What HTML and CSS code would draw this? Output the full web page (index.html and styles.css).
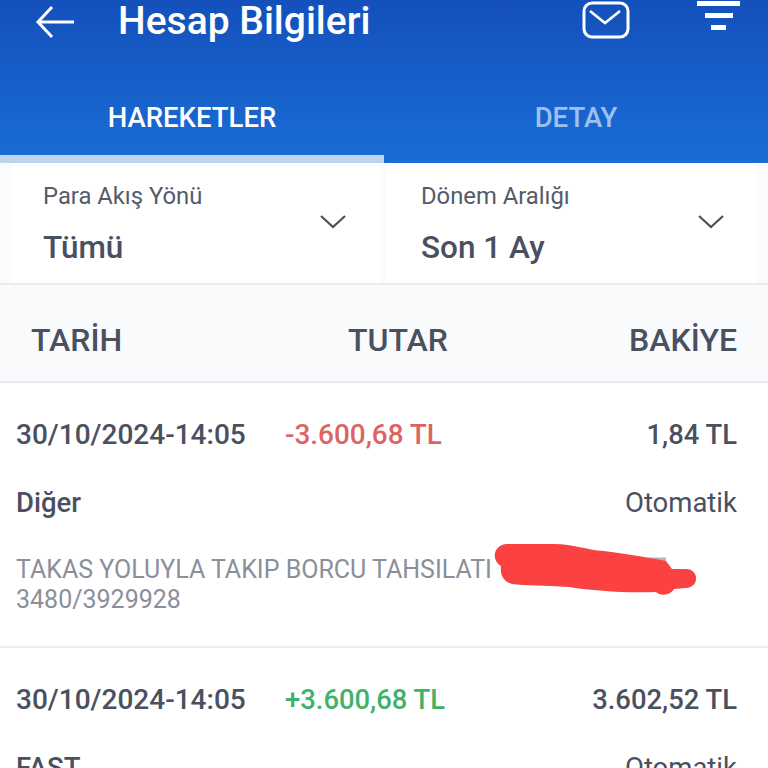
FILE: index.html
```html
<!DOCTYPE html>
<html lang="tr">
<head>
    <meta charset="UTF-8">
    <meta name="viewport" content="width=device-width, initial-scale=1.0">
    <title>Hesap Bilgileri</title>
    <link rel="stylesheet" href="styles.css">
</head>
<body>

<div class="page">
    <header class="header">
        <div class="topbar">
            <svg class="icon-back" width="40" height="34" viewBox="0 0 40 34" fill="none" stroke="#fff" stroke-width="3">
                <path d="M17 2 L3 17 L17 32"/>
                <path d="M3 17 H39"/>
            </svg>
            <div class="page-title">Hesap Bilgileri</div>
            <svg class="icon-mail" width="48" height="38" viewBox="0 0 48 38" fill="none" stroke="#fff">
                <rect x="2" y="2" width="44" height="34" rx="8" stroke-width="3"/>
                <path d="M8 10 L23 22 L38 10" stroke-width="2.6"/>
            </svg>
            <div class="icon-filter">
                <span class="filter-line line-1"></span>
                <span class="filter-line line-2"></span>
                <span class="filter-line line-3"></span>
            </div>
        </div>
        <div class="tabs">
            <div class="tab tab-active">HAREKETLER</div>
            <div class="tab">DETAY</div>
        </div>
    </header>

    <section class="filters">
        <div class="filter-box">
            <div>
                <div class="filter-label">Para Akış Yönü</div>
                <div class="filter-value">Tümü</div>
            </div>
            <svg class="chevron" width="26" height="14" viewBox="0 0 26 14" fill="none" stroke="#4a5060" stroke-width="2.2">
                <path d="M1 1 L13 12 L25 1"/>
            </svg>
        </div>
        <div class="filter-box">
            <div>
                <div class="filter-label">Dönem Aralığı</div>
                <div class="filter-value">Son 1 Ay</div>
            </div>
            <svg class="chevron" width="26" height="14" viewBox="0 0 26 14" fill="none" stroke="#4a5060" stroke-width="2.2">
                <path d="M1 1 L13 12 L25 1"/>
            </svg>
        </div>
    </section>

    <div class="table-head">
        <span>TARİH</span>
        <span>TUTAR</span>
        <span>BAKİYE</span>
    </div>

    <article class="row">
        <div class="row-main">
            <span class="cell-date">30/10/2024-14:05</span>
            <span class="cell-amount minus">-3.600,68 TL</span>
            <span class="cell-balance">1,84 TL</span>
        </div>
        <div class="row-type">
            <span class="type-name">Diğer</span>
            <span class="type-mode">Otomatik</span>
        </div>
        <div class="row-desc">
            TAKAS YOLUYLA TAKIP BORCU TAHSILATI<br>3480/3929928
            <svg class="scribble" width="204" height="54" viewBox="0 0 204 54" fill="#fb4141">
                <path d="M154 14.5 H172 V18 H154 Z" fill="#b4b7bd"/>
                <path d="M12 1 H60 C80 1 92 7 110 8 C135 11 155 15 172 18 L178 26 H192 C205 26 206 44 192 45 L180 46 C176 53 166 53 162 49 C130 50 100 48 75 44 C50 42 30 43 18 41 C8 38 6 30 7 23 C-2 18 -2 3 12 1 Z"/>
            </svg>
        </div>
    </article>

    <article class="row">
        <div class="row-main">
            <span class="cell-date">30/10/2024-14:05</span>
            <span class="cell-amount plus">+3.600,68 TL</span>
            <span class="cell-balance">3.602,52 TL</span>
        </div>
        <div class="row-type">
            <span class="type-name">FAST</span>
            <span class="type-mode">Otomatik</span>
        </div>
    </article>
</div>

</body>
</html>
```

FILE: styles.css
```css
html, body {
    height: 768px;
    overflow: hidden;
}
body {
    font-family: Roboto, "Liberation Sans", sans-serif;
    background-color: #fff;
    color: #4a5060;
    margin: 0;
}
.page {
    height: 768px;
    overflow: hidden;
}

/* header */
.header {
    height: 163px;
    background: linear-gradient(180deg, #1450bb 0%, #1a6dd6 100%);
    display: flex;
    flex-direction: column;
    justify-content: space-between;
}
.topbar {
    display: flex;
    align-items: center;
    height: 42px;
    padding-left: 35px;
    color: #fff;
}
.icon-back {
    flex: none;
    margin-top: 1px;
}
.page-title {
    font-size: 39px;
    font-weight: 500;
    line-height: 42px;
    margin-left: 43px;
    flex: 1;
}
.icon-mail {
    flex: none;
    margin-right: 67px;
    margin-top: -2px;
}
.icon-filter {
    display: flex;
    flex-direction: column;
    align-items: center;
    align-self: flex-start;
    gap: 7px;
    width: 43px;
    margin-right: 28px;
    padding-top: 1px;
}
.filter-line {
    display: block;
    height: 5px;
    background: #fff;
}
.line-1 { width: 43px; }
.line-2 { width: 28px; }
.line-3 { width: 15px; }

.tabs {
    display: flex;
    height: 73px;
}
.tab {
    flex: 1;
    text-align: center;
    font-size: 27.5px;
    font-weight: 500;
    line-height: 56px;
    color: #9cc1f0;
}
.tab-active {
    color: #fff;
    border-bottom: 8px solid #bcd4f0;
}

/* filters */
.filters {
    display: flex;
    gap: 6px;
    height: 120px;
    padding: 0 12px;
    background: #fafbfc;
    border-bottom: 2px solid #e8eaed;
}
.filter-box {
    flex: 1;
    display: flex;
    align-items: flex-start;
    justify-content: space-between;
    background: #fff;
    padding: 19px 34px 0 31px;
}
.filter-box:last-child {
    padding-left: 35px;
    padding-right: 32px;
}
.filter-label {
    font-size: 23.8px;
    line-height: 28px;
    color: #555b68;
}
.filter-value {
    font-size: 31.5px;
    font-weight: 500;
    line-height: 36px;
    margin-top: 20px;
}
.chevron {
    margin-top: 33px;
}

/* table */
.table-head {
    display: grid;
    grid-template-columns: 317px 1fr auto;
    align-items: center;
    height: 98px;
    padding: 14px 31px 0;
    box-sizing: border-box;
    background: #f8fafc;
    border-bottom: 2px solid #e8eaed;
    font-size: 32px;
    font-weight: 500;
}
.row {
    padding: 0 31px 0 16px;
    border-bottom: 2px solid #eceef0;
    height: 263px;
}
.row-main {
    display: flex;
    align-items: center;
    height: 103px;
    font-size: 28px;
    font-weight: 500;
}
.cell-date {
    width: 269px;
}
.cell-amount {
    flex: 1;
    font-size: 27.4px;
}
.cell-balance {
    font-size: 27.4px;
}
.minus {
    color: #dc6464;
    font-size: 27.9px;
}
.plus {
    color: #3fb168;
}
.row-type {
    display: flex;
    justify-content: space-between;
    align-items: center;
    height: 36px;
    margin-top: -2px;
    font-size: 27.5px;
}
.type-name {
    font-weight: 500;
}
.row-desc {
    position: relative;
    margin-top: 35px;
    font-size: 25px;
    line-height: 30px;
    color: #8a8f99;
}
.scribble {
    position: absolute;
    left: 478px;
    top: -12px;
}
```
